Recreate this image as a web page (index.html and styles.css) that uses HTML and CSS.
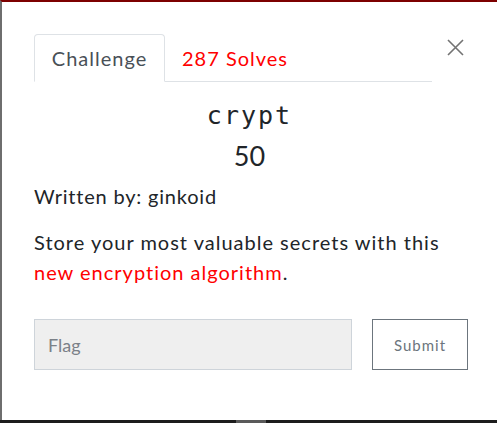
FILE: index.html
```html
<!DOCTYPE html>
<html>
<head>
<meta charset="utf-8">
<link rel="stylesheet" href="styles.css">
</head>
<body>
<div class="frame">
  <div class="modal">
    <div class="head">
      <ul class="tabs">
        <li class="tab active">Challenge</li>
        <li class="tab solves">287 Solves</li>
      </ul>
      <button class="close" aria-label="Close">
        <svg width="17" height="17" viewBox="0 0 17 17"><path d="M1 1L16 16M16 1L1 16" stroke="#737373" stroke-width="1.6" fill="none"/></svg>
      </button>
    </div>
    <h2 class="name">crypt</h2>
    <h3 class="value">50</h3>
    <p class="author">Written by: ginkoid</p>
    <p class="desc">Store your most valuable secrets with this <a class="link">new encryption algorithm</a>.</p>
    <form class="submit-row">
      <input class="flag" type="text" placeholder="Flag">
      <button class="submit" type="button">Submit</button>
    </form>
  </div>
</div>
<div class="bar"><span class="thumb"></span></div>
</body>
</html>
```
FILE: styles.css
```css
html, body {
  margin: 0;
  padding: 0;
  height: 423px;
  overflow: hidden;
  background: #1c1c1c;
}
.frame {
  box-sizing: border-box;
  height: 420px;
  border-top: 2px solid #7d0000;
  border-left: 2px solid #6e6e6e;
  background: #fff;
}
.bar {
  height: 3px;
  background: #1c1c1c;
  display: flex;
}
.thumb {
  margin-left: 236px;
  width: 30px;
  background: #5a5a5a;
}
.modal {
  padding: 32px 0 0 32px;
  font-family: "Source Sans Pro", Lato, "Noto Sans", sans-serif;
  color: #212529;
}
.head {
  display: flex;
  align-items: flex-start;
}
.tabs {
  flex: 0 0 398px;
  display: flex;
  margin: 0;
  padding: 0;
  list-style: none;
  border-bottom: 1px solid #dee2e6;
}
.tab {
  box-sizing: border-box;
  height: 48px;
  padding: 0 16px;
  font-size: 20px;
  letter-spacing: 1px;
  line-height: 47px;
  border: 1px solid transparent;
  border-top-left-radius: 4px;
  border-top-right-radius: 4px;
  margin-bottom: -1px;
}
.tab.active {
  color: #495057;
  border-color: #dee2e6 #dee2e6 #fff;
  background: #fff;
  width: 131px;
  text-align: center;
  padding: 0;
}
.tab.solves {
  color: #ff0000;
}
.close {
  margin: 5px 0 0 15px;
  padding: 0;
  border: 0;
  background: none;
  width: 17px;
  height: 17px;
  display: block;
}
.close svg { display: block; }
.name {
  margin: 17px 32px 0 0;
  text-align: center;
  font-family: "DejaVu Sans Mono", monospace;
  font-weight: normal;
  font-size: 25px;
  letter-spacing: 2px;
  line-height: 34px;
}
.value {
  margin: 6px 32px 0 0;
  text-align: center;
  font-weight: normal;
  font-size: 27px;
  line-height: 34px;
}
.author {
  margin: 8px 0 0;
  font-size: 20px;
  letter-spacing: 0.8px;
  line-height: 30px;
}
.desc {
  margin: 16px 0 0;
  max-width: 410px;
  font-size: 20px;
  letter-spacing: 1px;
  line-height: 30px;
}
.link {
  color: #ff0000;
}
.submit-row {
  display: flex;
  gap: 20px;
  margin-top: 32px;
}
.flag {
  box-sizing: border-box;
  width: 318px;
  height: 51px;
  padding: 0 13px;
  background: #efefef;
  border: 1px solid #ced4da;
  font-family: inherit;
  font-size: 18px;
  color: #495057;
  outline: none;
}
.flag::placeholder {
  color: #7b8188;
}
.submit {
  box-sizing: border-box;
  width: 96px;
  height: 51px;
  background: #fff;
  border: 1px solid #6c757d;
  color: #6c757d;
  font-family: inherit;
  font-size: 15px;
  letter-spacing: 1px;
}
```
